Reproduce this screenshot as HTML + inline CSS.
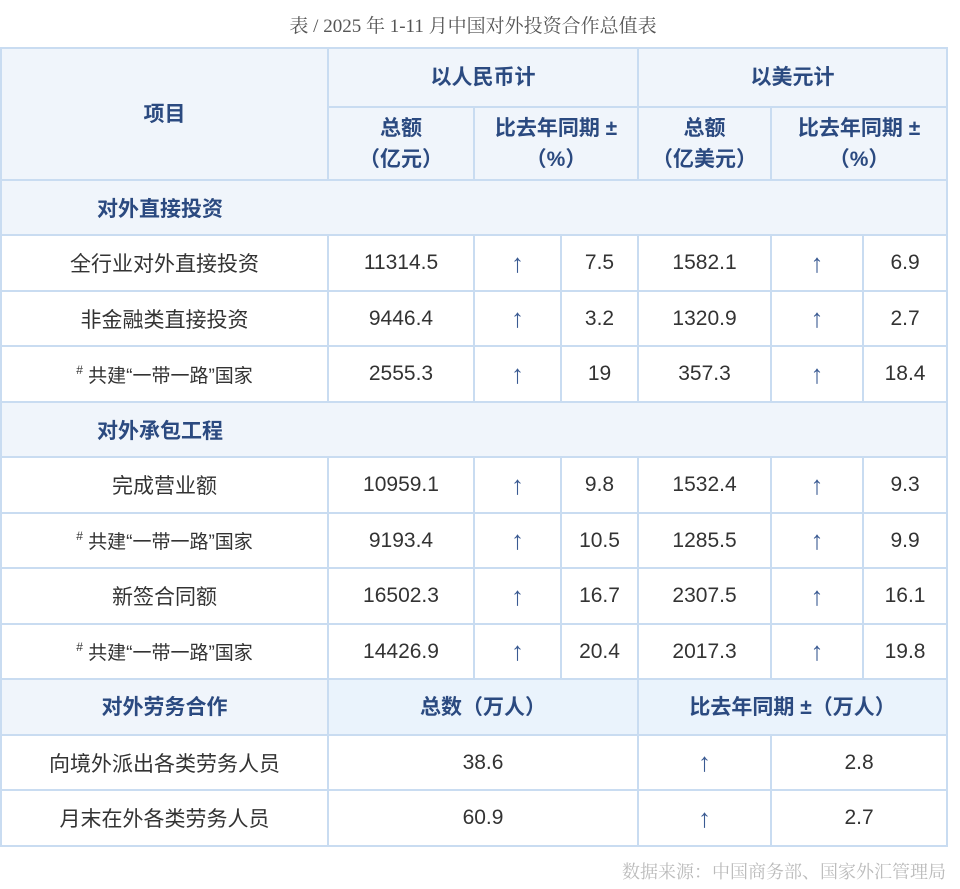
<!DOCTYPE html>
<html><head><meta charset="utf-8">
<style>
body{margin:0;width:960px;height:889px;background:#fff;position:relative;overflow:hidden;font-family:"Liberation Sans","Noto Sans CJK SC",sans-serif;}
.title{position:absolute;top:11px;left:0;width:946px;text-align:center;font-family:"Liberation Serif","Noto Serif CJK SC",serif;font-size:19px;color:#555;}
table{position:absolute;top:47px;left:0;border-collapse:collapse;table-layout:fixed;width:946px;}
td{border:2px solid #c9dcf1;text-align:center;font-size:21px;color:#333;padding:0;}
.h{background:#f0f5fb;color:#2b4a80;font-weight:bold;font-size:21px;line-height:31px;}
.s td{background:#f0f5fb;}
.s td.h1{color:#2b4a80;font-weight:bold;font-size:21px;text-align:left;padding-left:95px;}
.a{color:#3a5a92;font-size:26px;font-weight:300;}
sup{font-size:12px;vertical-align:8px;}
.sm{font-size:19px;}
.lh td.h{background:#eaf3fc;}
.lh td.h.f{background:#f0f5fb;}
.src{position:absolute;top:858px;right:14px;font-size:18px;color:#bbb;font-family:"Liberation Serif","Noto Serif CJK SC",serif;}
</style></head><body>
<div class="title">表 / 2025 年 1-11 月中国对外投资合作总值表</div>
<table>
<colgroup><col style="width:327px"><col style="width:146px"><col style="width:87px"><col style="width:77px"><col style="width:133px"><col style="width:92px"><col style="width:84px"></colgroup>
<tr style="height:59px"><td class="h" rowspan="2">项目</td><td class="h" colspan="3">以人民币计</td><td class="h" colspan="3">以美元计</td></tr>
<tr style="height:73px"><td class="h">总额<br>（亿元）</td><td class="h" colspan="2">比去年同期 ±<br>（%）</td><td class="h">总额<br>（亿美元）</td><td class="h" colspan="2">比去年同期 ±<br>（%）</td></tr>
<tr class="s" style="height:55px"><td class="h1" colspan="7">对外直接投资</td></tr>
<tr style="height:56px"><td>全行业对外直接投资</td><td>11314.5</td><td class="a">↑</td><td>7.5</td><td>1582.1</td><td class="a">↑</td><td>6.9</td></tr>
<tr style="height:55px"><td>非金融类直接投资</td><td>9446.4</td><td class="a">↑</td><td>3.2</td><td>1320.9</td><td class="a">↑</td><td>2.7</td></tr>
<tr style="height:56px"><td class="sm"><sup>#</sup> 共建“一带一路”国家</td><td>2555.3</td><td class="a">↑</td><td>19</td><td>357.3</td><td class="a">↑</td><td>18.4</td></tr>
<tr class="s" style="height:55px"><td class="h1" colspan="7">对外承包工程</td></tr>
<tr style="height:56px"><td>完成营业额</td><td>10959.1</td><td class="a">↑</td><td>9.8</td><td>1532.4</td><td class="a">↑</td><td>9.3</td></tr>
<tr style="height:55px"><td class="sm"><sup>#</sup> 共建“一带一路”国家</td><td>9193.4</td><td class="a">↑</td><td>10.5</td><td>1285.5</td><td class="a">↑</td><td>9.9</td></tr>
<tr style="height:56px"><td>新签合同额</td><td>16502.3</td><td class="a">↑</td><td>16.7</td><td>2307.5</td><td class="a">↑</td><td>16.1</td></tr>
<tr style="height:55px"><td class="sm"><sup>#</sup> 共建“一带一路”国家</td><td>14426.9</td><td class="a">↑</td><td>20.4</td><td>2017.3</td><td class="a">↑</td><td>19.8</td></tr>
<tr class="lh" style="height:56px"><td class="h f">对外劳务合作</td><td class="h" colspan="3">总数（万人）</td><td class="h" colspan="3">比去年同期 ±（万人）</td></tr>
<tr style="height:55px"><td>向境外派出各类劳务人员</td><td colspan="3">38.6</td><td class="a">↑</td><td colspan="2">2.8</td></tr>
<tr style="height:56px"><td>月末在外各类劳务人员</td><td colspan="3">60.9</td><td class="a">↑</td><td colspan="2">2.7</td></tr>
</table>
<div class="src">数据来源：中国商务部、国家外汇管理局</div>
</body></html>
